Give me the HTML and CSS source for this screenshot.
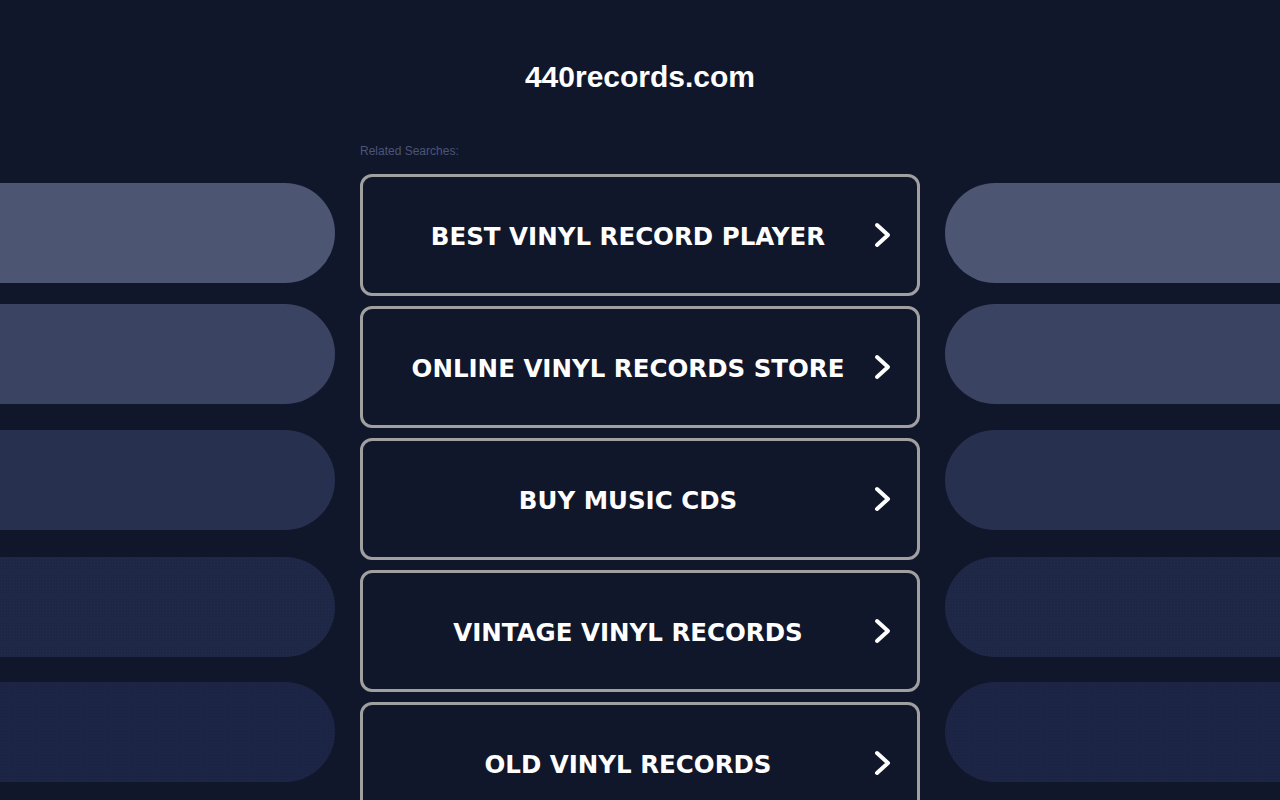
FILE: index.html
```html
<!DOCTYPE html>
<html lang="en">
<head>
    <meta charset="UTF-8">
    <meta name="viewport" content="width=device-width, initial-scale=1.0">
    <title>440records.com</title>
    <link rel="stylesheet" href="styles.css">
</head>
<body>
    <header class="header">
        <h1 class="domain">440records.com</h1>
    </header>

    <main class="layout">
        <div class="side side-left">
            <div class="pill pill-1"></div>
            <div class="pill pill-2"></div>
            <div class="pill pill-3"></div>
            <div class="pill pill-4"></div>
            <div class="pill pill-5"></div>
        </div>

        <div class="center">
            <p class="related">Related Searches:</p>
            <a class="search-link" href="#">
                <span class="search-text">BEST VINYL RECORD PLAYER</span>
                <svg class="chevron" viewBox="0 0 17 26"><polyline points="3,3 14,13 3,23"/></svg>
            </a>
            <a class="search-link" href="#">
                <span class="search-text">ONLINE VINYL RECORDS STORE</span>
                <svg class="chevron" viewBox="0 0 17 26"><polyline points="3,3 14,13 3,23"/></svg>
            </a>
            <a class="search-link" href="#">
                <span class="search-text">BUY MUSIC CDS</span>
                <svg class="chevron" viewBox="0 0 17 26"><polyline points="3,3 14,13 3,23"/></svg>
            </a>
            <a class="search-link" href="#">
                <span class="search-text">VINTAGE VINYL RECORDS</span>
                <svg class="chevron" viewBox="0 0 17 26"><polyline points="3,3 14,13 3,23"/></svg>
            </a>
            <a class="search-link" href="#">
                <span class="search-text">OLD VINYL RECORDS</span>
                <svg class="chevron" viewBox="0 0 17 26"><polyline points="3,3 14,13 3,23"/></svg>
            </a>
        </div>

        <div class="side side-right">
            <div class="pill pill-1"></div>
            <div class="pill pill-2"></div>
            <div class="pill pill-3"></div>
            <div class="pill pill-4"></div>
            <div class="pill pill-5"></div>
        </div>
    </main>
</body>
</html>
```

FILE: styles.css
```css
body {
    margin: 0;
    background-color: #11172b;
    font-family: "Liberation Sans", Arial, sans-serif;
    color: #fff;
    overflow: hidden;
}

.header {
    padding-top: 60px;
    text-align: center;
}
.domain {
    margin: 0;
    font-size: 30px;
    line-height: 34px;
    font-weight: bold;
    color: #fff;
}

.layout {
    display: grid;
    grid-template-columns: 335px 560px 335px;
    column-gap: 25px;
    margin-top: 48px;
}

/* decorative pills on both sides */
.side {
    display: flex;
    flex-direction: column;
    padding-top: 41px;
}
.pill {
    height: 100px;
}
.side-left .pill {
    border-radius: 0 50px 50px 0;
}
.side-right .pill {
    border-radius: 50px 0 0 50px;
}
.pill-1 { background-color: #4c5572; }
.pill-2 { background-color: #3a4361; margin-top: 21px; }
.pill-3 { background-color: #28304f; margin-top: 26px; }
.pill-4 {
    background-color: #1e2746;
    margin-top: 27px;
    background-image: radial-gradient(rgba(255,255,255,0.025) 0.6px, transparent 0.8px);
    background-size: 3px 3px;
}
.pill-5 {
    background-color: #1c2546;
    margin-top: 25px;
    background-image: radial-gradient(rgba(0,0,0,0.12) 0.6px, transparent 0.8px);
    background-size: 3px 3px;
}

.center {
    display: flex;
    flex-direction: column;
    gap: 10px;
}
.related {
    margin: 1px 0 5px;
    font-size: 12px;
    line-height: 16px;
    color: #4a5577;
}

.search-link {
    display: flex;
    align-items: center;
    height: 116px;
    padding-left: 40px;
    padding-right: 26px;
    border: 3px solid #a0a0a0;
    border-radius: 12px;
    text-decoration: none;
    color: #fff;
}
.search-text {
    flex: 1;
    padding-top: 3px;
    text-align: center;
    font-family: "DejaVu Sans", Verdana, sans-serif;
    font-size: 24.5px;
    font-weight: bold;
}
.chevron {
    width: 17px;
    height: 26px;
    margin-left: 21px;
    fill: none;
    stroke: #fff;
    stroke-width: 4;
    stroke-linecap: round;
    stroke-linejoin: round;
}
```
